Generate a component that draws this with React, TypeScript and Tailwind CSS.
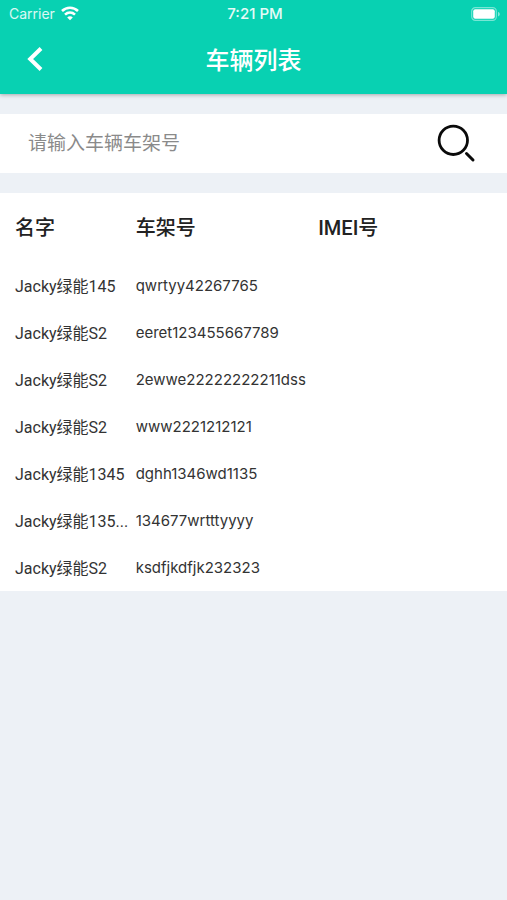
import React from 'react';

interface Vehicle {
  id: number;
  name: string;
  frameNo: string;
  imei: string;
}

const vehicles: Vehicle[] = [
  { id: 1, name: 'Jacky绿能145', frameNo: 'qwrtyy42267765', imei: '' },
  { id: 2, name: 'Jacky绿能S2', frameNo: 'eeret123455667789', imei: '' },
  { id: 3, name: 'Jacky绿能S2', frameNo: '2ewwe22222222211dss', imei: '' },
  { id: 4, name: 'Jacky绿能S2', frameNo: 'www2221212121', imei: '' },
  { id: 5, name: 'Jacky绿能1345', frameNo: 'dghh1346wd1135', imei: '' },
  { id: 6, name: 'Jacky绿能135...', frameNo: '134677wrtttyyyy', imei: '' },
  { id: 7, name: 'Jacky绿能S2', frameNo: 'ksdfjkdfjk232323', imei: '' },
];

const WifiIcon = () => (
  <svg className="h-[15px] w-[18px]" viewBox="0 0 18 15" fill="none" stroke="currentColor" strokeWidth="2.6">
    <path d="M1 5C5.600 .6 12.400 .6 17 5" />
    <path d="M4 8.600c2.900-2.700 7.100-2.700 10 0" />
    <path d="M9 14.200 6.200 11.400c1.600-1.400 4-1.400 5.600 0Z" fill="currentColor" stroke="none" />
  </svg>
);

const BatteryIcon = () => (
  <svg className="h-[14px] w-[30px]" viewBox="0 0 30 14" fill="none">
    <rect x="0.7" y="0.7" width="24.600" height="12.600" rx="3.600" stroke="currentColor" strokeOpacity="0.45" strokeWidth="1.2" />
    <rect x="2.200" y="2.200" width="21.600" height="9.600" rx="2" fill="currentColor" />
    <path d="M27 5v4.400c1.200-.4 1.800-1.200 1.800-2.200S28.200 5.400 27 5Z" fill="currentColor" fillOpacity="0.5" />
  </svg>
);

const StatusBar = () => (
  <div className="grid h-7 grid-cols-3 items-center pl-[9px] pr-[6px] font-['Inter','Liberation_Sans',sans-serif] text-sm leading-4">
    <div className="flex items-center gap-[6px] text-white/85">
      <span>Carrier</span>
      <span className="pb-[2px] text-white">
        <WifiIcon />
      </span>
    </div>
    <span className="text-center text-[15px] font-medium text-white/90">7:21 PM</span>
    <div className="flex justify-end">
      <BatteryIcon />
    </div>
  </div>
);

const Header = () => (
  <header className="relative bg-[#08d1b2] text-white shadow-[0_1px_4px_rgba(0,0,0,0.3)]">
    <StatusBar />
    <div className="grid h-[66px] grid-cols-[70px_1fr_70px] items-center">
      <button type="button" aria-label="返回" className="flex h-full items-center justify-center pb-1">
        <svg className="h-6 w-4" viewBox="0 0 16 24" fill="none" stroke="currentColor" strokeWidth="4">
          <path d="M14 1.500 3.200 12 14 22.500" />
        </svg>
      </button>
      <h1 className="text-center text-2xl font-medium">车辆列表</h1>
    </div>
  </header>
);

const SearchBar = () => (
  <form className="flex h-[59px] items-center bg-white pl-7 pr-[31px]" onSubmit={(e) => e.preventDefault()}>
    <input
      type="text"
      aria-label="车辆车架号"
      placeholder="请输入车辆车架号"
      className="h-full min-w-0 flex-1 bg-transparent text-[19px] text-[#333] outline-none placeholder:text-[#8a8a8a]"
    />
    <button type="submit" aria-label="搜索">
      <svg className="h-10 w-10" viewBox="0 0 40 40" fill="none" stroke="#0a0a0a">
        <circle cx="17.300" cy="16.300" r="14.200" strokeWidth="2.800" />
        <path d="M30.500 29.500 37 36" strokeWidth="3" strokeLinecap="round" />
      </svg>
    </button>
  </form>
);

const VehicleTable = () => (
  <table className="w-full table-fixed bg-white text-left">
    <colgroup>
      <col className="w-[24%]" />
      <col className="w-[36%]" />
      <col className="w-[40%]" />
    </colgroup>
    <thead>
      <tr className="h-[69px] text-xl text-[#222]">
        <th className="pl-[15px] font-medium">名字</th>
        <th className="pl-[14px] font-medium">车架号</th>
        <th className="pl-[14px] font-medium">IMEI号</th>
      </tr>
    </thead>
    <tbody>
      {vehicles.map((vehicle) => (
        <tr key={vehicle.id} className="h-[47px] whitespace-nowrap text-[#333]">
          <td className="pl-[15px] pt-[2px] text-base">{vehicle.name}</td>
          <td className="pl-[14px] pt-[2px] font-['Inter','Liberation_Sans',sans-serif] text-[15px]">{vehicle.frameNo}</td>
          <td className="pl-[14px] pt-[2px] font-['Inter','Liberation_Sans',sans-serif] text-[15px]">{vehicle.imei}</td>
        </tr>
      ))}
    </tbody>
  </table>
);

export default function App() {
  return (
    <div className="min-h-screen bg-[#edf1f6] font-['Roboto','Noto_Sans_CJK_SC',sans-serif]">
      <Header />
      <main className="flex flex-col gap-5 pt-5">
        <SearchBar />
        <VehicleTable />
      </main>
    </div>
  );
}
